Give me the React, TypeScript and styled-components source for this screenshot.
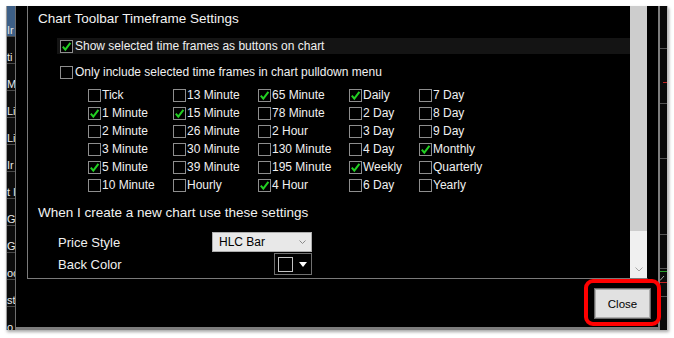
import styled, { createGlobalStyle } from "styled-components";

const GlobalStyle = createGlobalStyle`
  html, body {
    margin: 0;
    padding: 0;
    background: #ffffff;
  }
  body {
    font-family: "Liberation Sans", Arial, sans-serif;
  }
`;

const Page = styled.div`
  width: 674px;
  height: 338px;
  box-sizing: border-box;
  padding: 6px 6px 0 6px;
  background: #ffffff;
  overflow: hidden;
`;

const Screen = styled.div`
  position: relative;
  display: flex;
  width: 662px;
  height: 324px;
  box-shadow: 1px 2px 3px rgba(0, 0, 0, 0.35);
`;

const SideList = styled.div`
  width: 9px;
  box-sizing: border-box;
  border-left: 1px solid #9a9a9a;
  background: #0c0c0c;
  display: flex;
  flex-direction: column;
  overflow: hidden;
`;

const SideItem = styled.div<{ $active?: boolean }>`
  flex: 0 0 ${(p) => (p.$active ? 31 : 27)}px;
  box-sizing: border-box;
  display: flex;
  align-items: flex-end;
  border-bottom: 1px solid #4a4a4a;
  background: ${(p) => (p.$active ? "#3d5f86" : "transparent")};
  color: #e8e8e8;
  font-size: 11px;
  line-height: 12px;
  white-space: nowrap;
  overflow: hidden;
`;

const Dialog = styled.div`
  flex: 1;
  display: flex;
  flex-direction: column;
  background: #000000;
  border-left: 1px solid #6f6f6f;
  border-right: 2px solid #7d7d7d;
  border-bottom: 3px solid #7d7d7d;
`;

const Panel = styled.div`
  margin: 0 10px 0 11px;
  height: 273px;
  box-sizing: border-box;
  display: flex;
  border-left: 1px solid #7a7a7a;
  border-bottom: 1px solid #7a7a7a;
  border-right: 1px solid #000000;
`;

const Content = styled.div`
  flex: 1;
  display: flex;
  flex-direction: column;
  padding-left: 10px;
  color: #f0f0f0;
`;

const Heading = styled.div<{ $top: number }>`
  margin-top: ${(p) => p.$top}px;
  line-height: 18px;
  font-size: 13.5px;
  color: #f2f2f2;
`;

const OptionRow = styled.div<{ $top: number; $highlight?: boolean }>`
  margin: ${(p) => p.$top}px 0 0 19px;
  height: 16px;
  padding-left: 3px;
  display: flex;
  align-items: center;
  gap: 2px;
  font-size: 12px;
  background: ${(p) => (p.$highlight ? "#141414" : "transparent")};
`;

const Box = styled.span`
  width: 13px;
  height: 13px;
  box-sizing: border-box;
  border: 1px solid #8e8e8e;
  background: #000000;
  display: inline-flex;
  align-items: center;
  justify-content: center;
  flex-shrink: 0;
`;

const TimeGrid = styled.div`
  margin: 6px 0 0 50px;
  display: grid;
  grid-template-columns: 85px 85px 91px 70px 80px;
  grid-template-rows: repeat(6, 18px);
  grid-auto-flow: column;
`;

const TimeItem = styled.div`
  display: flex;
  align-items: center;
  gap: 1px;
  font-size: 12px;
  white-space: nowrap;
`;

const Settings = styled.div`
  margin: 10px 0 0 20px;
  display: grid;
  grid-template-columns: 154px 100px;
  grid-template-rows: 20px 22px;
  row-gap: 1px;
`;

const Label = styled.div`
  align-self: center;
  font-size: 13px;
  color: #f0f0f0;
`;

const Select = styled.div`
  box-sizing: border-box;
  height: 20px;
  border: 1px solid #adadad;
  background: #e8e8e8;
  color: #000000;
  font-size: 12px;
  display: flex;
  align-items: center;
  justify-content: space-between;
  padding: 0 5px 0 6px;
`;

const ColorPicker = styled.div`
  justify-self: end;
  width: 38px;
  height: 22px;
  box-sizing: border-box;
  border: 1px solid #707070;
  background: #000000;
  display: flex;
  align-items: center;
  gap: 6px;
  padding-left: 3px;
`;

const Swatch = styled.span`
  width: 15px;
  height: 15px;
  box-sizing: border-box;
  border: 1px solid #c4c4c4;
  background: #000000;
`;

const ScrollBar = styled.div`
  width: 17px;
  display: flex;
  flex-direction: column;
  background: #f0f0f0;
`;

const Thumb = styled.div`
  flex: 0 0 225px;
  background: #cdcdcd;
`;

const ArrowButton = styled.div`
  margin-top: auto;
  height: 17px;
  display: flex;
  align-items: center;
  justify-content: center;
`;

const Footer = styled.div`
  display: flex;
  justify-content: flex-end;
  padding: 10px 8px 0 0;
`;

const Button = styled.button`
  width: 55px;
  height: 29px;
  box-sizing: border-box;
  border: 1px solid #adadad;
  outline: 1px solid #6a6a6a;
  background: #e1e1e1;
  color: #000000;
  font-family: "Liberation Sans", Arial, sans-serif;
  font-size: 11.5px;
  padding: 0;
`;

const Callout = styled.div`
  position: absolute;
  left: 578px;
  top: 273px;
  width: 77px;
  height: 47px;
  box-sizing: border-box;
  border: 4px solid #ff0000;
  border-radius: 9px;
  pointer-events: none;
`;

const ChartStrip = styled.div`
  width: 7px;
  background: #0a0a0a;
  border-right: 1px solid #bdbdbd;
`;

const Check = () => (
  <svg width="11" height="11" viewBox="0 0 11 11">
    <path d="M1.8 5.6 L4.3 8.6 L9.4 1.8" fill="none" stroke="#22d022" strokeWidth="2" />
  </svg>
);

const CheckBox = ({ checked }: { checked?: boolean }) => <Box>{checked && <Check />}</Box>;

const sideLabels = ["Ir", "ti", "M", "Li", "Li", "Ir", "t I", "Gl", "Gl", "oc", "st", "o"];

const timeFrames: [string, boolean][] = [
  ["Tick", false],
  ["1 Minute", true],
  ["2 Minute", false],
  ["3 Minute", false],
  ["5 Minute", true],
  ["10 Minute", false],
  ["13 Minute", false],
  ["15 Minute", true],
  ["26 Minute", false],
  ["30 Minute", false],
  ["39 Minute", false],
  ["Hourly", false],
  ["65 Minute", true],
  ["78 Minute", false],
  ["2 Hour", false],
  ["130 Minute", false],
  ["195 Minute", false],
  ["4 Hour", true],
  ["Daily", true],
  ["2 Day", false],
  ["3 Day", false],
  ["4 Day", false],
  ["Weekly", true],
  ["6 Day", false],
  ["7 Day", false],
  ["8 Day", false],
  ["9 Day", false],
  ["Monthly", true],
  ["Quarterly", false],
  ["Yearly", false],
];

export default function App() {
  return (
    <Page>
      <GlobalStyle />
      <Screen>
        <SideList>
          {sideLabels.map((l, i) => (
            <SideItem key={i} $active={i === 0}>
              {l}
            </SideItem>
          ))}
        </SideList>
        <Dialog>
          <Panel>
            <Content>
              <Heading $top={4}>Chart Toolbar Timeframe Settings</Heading>
              <OptionRow $top={10} $highlight>
                <CheckBox checked />
                Show selected time frames as buttons on chart
              </OptionRow>
              <OptionRow $top={10}>
                <CheckBox />
                Only include selected time frames in chart pulldown menu
              </OptionRow>
              <TimeGrid>
                {timeFrames.map(([name, on]) => (
                  <TimeItem key={name}>
                    <CheckBox checked={on} />
                    {name}
                  </TimeItem>
                ))}
              </TimeGrid>
              <Heading $top={10}>When I create a new chart use these settings</Heading>
              <Settings>
                <Label>Price Style</Label>
                <Select>
                  HLC Bar
                  <svg width="7" height="4" viewBox="0 0 7 4">
                    <path d="M0.5 0.5 L3.5 3.5 L6.5 0.5" fill="none" stroke="#8a8a8a" strokeWidth="1" />
                  </svg>
                </Select>
                <Label>Back Color</Label>
                <ColorPicker>
                  <Swatch />
                  <svg width="8" height="5" viewBox="0 0 8 5">
                    <path d="M0 0 H8 L4 5 Z" fill="#ffffff" />
                  </svg>
                </ColorPicker>
              </Settings>
            </Content>
            <ScrollBar>
              <Thumb />
              <ArrowButton>
                <svg width="8" height="5" viewBox="0 0 8 5">
                  <path d="M0.5 0.5 L4 4 L7.5 0.5" fill="none" stroke="#a6a6a6" strokeWidth="1" />
                </svg>
              </ArrowButton>
            </ScrollBar>
          </Panel>
          <Footer>
            <Button>Close</Button>
          </Footer>
        </Dialog>
        <ChartStrip>
          <svg width="7" height="324" viewBox="0 0 7 324">
            <g stroke="#555555" strokeWidth="1">
              <line x1="0" y1="42.5" x2="7" y2="42.5" />
              <line x1="0" y1="97.5" x2="7" y2="97.5" />
              <line x1="0" y1="152.5" x2="7" y2="152.5" />
              <line x1="0" y1="228.5" x2="7" y2="228.5" />
              <line x1="0" y1="262.5" x2="7" y2="262.5" />
            </g>
            <line x1="3" y1="76.5" x2="7" y2="76.5" stroke="#c02020" />
            <line x1="0" y1="265.5" x2="7" y2="265.5" stroke="#2aa02a" />
            <line x1="0" y1="274.5" x2="4" y2="270" stroke="#aaaaaa" />
            <line x1="0" y1="276.5" x2="7" y2="276.5" stroke="#c02020" />
            <line x1="0" y1="290.5" x2="7" y2="290.5" stroke="#555555" />
          </svg>
        </ChartStrip>
        <Callout />
      </Screen>
    </Page>
  );
}
